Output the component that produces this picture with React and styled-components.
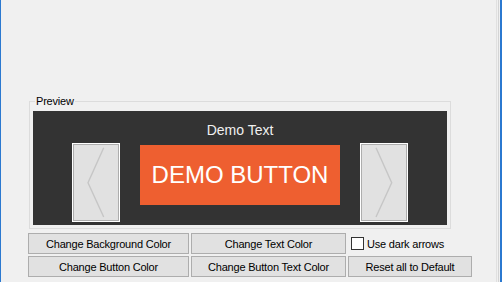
import React from 'react';
import styled, { createGlobalStyle } from 'styled-components';

const GlobalStyle = createGlobalStyle`
  html, body {
    margin: 0;
    padding: 0;
    background: #f0f0f0;
  }
  body {
    font-family: "Liberation Sans", Arial, sans-serif;
  }
`;

const Window = styled.div`
  display: flex;
  width: 502px;
  height: 282px;
  overflow: hidden;
  background: #f0f0f0;
  border-left: 1px solid #2b79d0;
  box-sizing: border-box;
`;

const Main = styled.div`
  flex: 1;
  display: flex;
  flex-direction: column;
  padding: 101px 0 0 27px;
`;

const EdgeStrip = styled.div`
  display: flex;
  width: 6px;
`;

const EdgeLine = styled.div`
  width: 1px;
  margin-right: 1px;
  background: ${(p) => p.color};
`;

const EdgeBlue = styled.div`
  width: 2px;
  background: #2b79d0;
`;

const GroupBox = styled.div`
  position: relative;
  width: 422px;
  height: 128px;
  margin-left: 1px;
  box-sizing: border-box;
  border: 1px solid #dcdcdc;
  padding: 9px 2px 0 3px;
`;

const Legend = styled.span`
  position: absolute;
  top: -8px;
  left: 5px;
  padding: 0 1px;
  background: #f0f0f0;
  font-size: 11px;
  line-height: 14px;
  letter-spacing: -0.2px;
  color: #000;
`;

const PreviewPanel = styled.div`
  width: 414px;
  height: 114px;
  background: #333333;
  display: flex;
  flex-direction: column;
  align-items: center;
  padding-top: 11px;
  box-sizing: border-box;
`;

const DemoText = styled.div`
  font-size: 14px;
  line-height: 16px;
  color: #f0f0f0;
`;

const PreviewRow = styled.div`
  display: flex;
  align-items: flex-start;
  gap: 20px;
  margin-top: 5px;
`;

const ArrowBox = styled.div`
  width: 48px;
  height: 79px;
  box-sizing: border-box;
  border: 1px solid #ffffff;
  box-shadow: inset 0 0 0 1px #adadad;
  background: #e1e1e1;
  display: flex;
`;

const DemoButton = styled.div`
  width: 200px;
  height: 60px;
  margin-top: 2px;
  background: #ee5f30;
  color: #ffffff;
  font-size: 24px;
  display: flex;
  align-items: center;
  justify-content: center;
`;

const Controls = styled.div`
  display: grid;
  grid-template-columns: 161px 155px 124px;
  grid-auto-rows: 21px;
  gap: 2px;
  margin-top: 4px;
`;

const WinButton = styled.div`
  box-sizing: border-box;
  border: 1px solid #adadad;
  background: #e1e1e1;
  display: flex;
  align-items: center;
  justify-content: center;
  font-size: 11px;
  letter-spacing: -0.2px;
  color: #000;
`;

const CheckRow = styled.label`
  display: flex;
  align-items: center;
  gap: 3px;
  padding-left: 3px;
  font-size: 11px;
  letter-spacing: -0.2px;
  color: #000;
`;

const CheckSquare = styled.span`
  width: 13px;
  height: 13px;
  box-sizing: border-box;
  border: 1px solid #333333;
  background: #ffffff;
`;

function Arrow({ dir }) {
  const points = dir === 'left' ? '30.7,3.7 15,38.7 30.7,73' : '15,3.7 30.7,38.7 15,73';
  return (
    <ArrowBox>
      <svg width="46" height="77" viewBox="0 0 46 77">
        <polyline points={points} fill="none" stroke="#c6c6c6" strokeWidth="1.4" />
      </svg>
    </ArrowBox>
  );
}

export default function App() {
  return (
    <>
      <GlobalStyle />
      <Window>
        <Main>
          {/* Preview group */}
          <GroupBox>
            <Legend>Preview</Legend>
            <PreviewPanel>
              <DemoText>Demo Text</DemoText>
              <PreviewRow>
                <Arrow dir="left" />
                <DemoButton>DEMO BUTTON</DemoButton>
                <Arrow dir="right" />
              </PreviewRow>
            </PreviewPanel>
          </GroupBox>

          {/* Buttons */}
          <Controls>
            <WinButton>Change Background Color</WinButton>
            <WinButton>Change Text Color</WinButton>
            <CheckRow>
              <CheckSquare />
              Use dark arrows
            </CheckRow>
            <WinButton>Change Button Color</WinButton>
            <WinButton>Change Button Text Color</WinButton>
            <WinButton>Reset all to Default</WinButton>
          </Controls>
        </Main>
        <EdgeStrip>
          <EdgeLine color="#e0e0e0" />
          <EdgeLine color="#d4d4d4" />
          <EdgeBlue />
        </EdgeStrip>
      </Window>
    </>
  );
}
